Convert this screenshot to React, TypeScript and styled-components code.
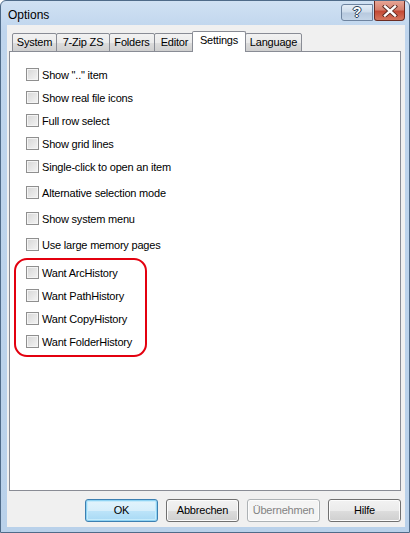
import React from 'react';
import styled, { createGlobalStyle } from 'styled-components';

const GlobalStyle = createGlobalStyle`
	html, body {
		margin: 0;
		padding: 0;
		background: #ffffff;
	}
	body {
		font-family: "Liberation Sans", Arial, sans-serif;
		font-size: 11px;
		letter-spacing: -0.2px;
		color: #000000;
	}
`;

interface TabItem {
	label: string;
	width: number;
}

interface OptionItem {
	label: string;
	gap: number;
}

const tabs: TabItem[] = [
	{ label: 'System', width: 45 },
	{ label: '7-Zip ZS', width: 54 },
	{ label: 'Folders', width: 46 },
	{ label: 'Editor', width: 41 },
	{ label: 'Settings', width: 52 },
	{ label: 'Language', width: 57 },
];

const options: OptionItem[] = [
	{ label: 'Show ".." item', gap: 0 },
	{ label: 'Show real file icons', gap: 0 },
	{ label: 'Full row select', gap: 0 },
	{ label: 'Show grid lines', gap: 0 },
	{ label: 'Single-click to open an item', gap: 0 },
	{ label: 'Alternative selection mode', gap: 3 },
	{ label: 'Show system menu', gap: 3 },
	{ label: 'Use large memory pages', gap: 3 },
];

const histories = ['Want ArcHistory', 'Want PathHistory', 'Want CopyHistory', 'Want FolderHistory'];

function Options() {
	const active = 'Settings';

	return (
		<>
			<GlobalStyle />
			<Window>
				<TitleBar>
					<Caption>Options</Caption>
					<CaptionButtons>
						<HelpButton>?</HelpButton>
						<CloseButton>
							<svg width="16" height="12" viewBox="0 0 16 12">
								<path d="M3 1.5 L13 10.5 M13 1.5 L3 10.5" stroke="#5a2a22" strokeWidth="4.2" strokeLinecap="square" />
								<path d="M3 1.5 L13 10.5 M13 1.5 L3 10.5" stroke="#ffffff" strokeWidth="2.4" strokeLinecap="square" />
							</svg>
						</CloseButton>
					</CaptionButtons>
				</TitleBar>
				<Client>
					<TabRow>
						{ tabs.map((tab) => (
							<Tab key={ tab.label } $width={ tab.width } $active={ tab.label === active }>
								{ tab.label }
							</Tab>
						)) }
					</TabRow>
					<Panel>
						{ options.map((opt) => (
							<CheckRow key={ opt.label } $gap={ opt.gap }>
								<Box />
								<span>{ opt.label }</span>
							</CheckRow>
						)) }
						<Highlight>
							{ histories.map((label) => (
								<CheckRow key={ label } $gap={ 0 } $inset>
									<Box />
									<span>{ label }</span>
								</CheckRow>
							)) }
						</Highlight>
					</Panel>
					<Footer>
						<Button $variant="default">OK</Button>
						<Button>Abbrechen</Button>
						<Button $variant="disabled">Übernehmen</Button>
						<Button>Hilfe</Button>
					</Footer>
				</Client>
			</Window>
		</>
	);
}

const Window = styled.div`
	box-sizing: border-box;
	width: 410px;
	height: 533px;
	display: flex;
	flex-direction: column;
	background: linear-gradient(to bottom, #d0e1f3 0px, #bfd5ed 30px, #b9d1ea 100%);
	border: 1px solid #4f6b89;
	border-radius: 6px 6px 0 0;
	overflow: hidden;
`;

const TitleBar = styled.div`
	height: 24px;
	display: flex;
	align-items: flex-start;
	justify-content: space-between;
	padding-left: 7px;
`;

const Caption = styled.div`
	font-size: 12px;
	line-height: 12px;
	letter-spacing: 0;
	margin-top: 8px;
	color: #000000;
`;

const CaptionButtons = styled.div`
	display: flex;
	align-items: flex-start;
	margin-right: 4px;
`;

const HelpButton = styled.div`
	box-sizing: border-box;
	width: 32px;
	height: 17px;
	margin-top: 3px;
	border: 1px solid #6e84a0;
	border-radius: 3px 0 0 3px;
	background: linear-gradient(to bottom, #e4edf7 0%, #cddbeb 48%, #b7c9de 52%, #c4d5e8 100%);
	color: #ffffff;
	font-weight: bold;
	font-size: 14px;
	line-height: 15px;
	text-align: center;
	text-shadow: 0 0 1px #30445c, 1px 0 0 #30445c, -1px 0 0 #30445c, 0 1px 0 #30445c, 0 -1px 0 #30445c;
`;

const CloseButton = styled.div`
	box-sizing: border-box;
	width: 31px;
	height: 20px;
	margin-left: 1px;
	border: 1px solid #6b2b22;
	border-top: none;
	border-radius: 0 0 4px 3px;
	background: linear-gradient(to bottom, #e7a595 0%, #d5806e 45%, #c44a35 55%, #d5765e 100%);
	display: flex;
	align-items: center;
	justify-content: center;
	padding-top: 1px;
`;

const Client = styled.div`
	flex: 1;
	display: flex;
	flex-direction: column;
	margin: 0 4px 5px 6px;
	padding: 6px 0 0 2px;
	background: #f0f0f0;
`;

const TabRow = styled.div`
	display: flex;
	align-items: flex-end;
	height: 21px;
	padding-left: 3px;
	margin-bottom: -1px;
	position: relative;
	z-index: 1;
`;

const Tab = styled.div<{ $width: number; $active?: boolean }>`
	box-sizing: border-box;
	width: ${ (p) => p.$active ? p.$width + 2 : p.$width }px;
	height: ${ (p) => p.$active ? 21 : 19 }px;
	margin: ${ (p) => p.$active ? '0 -1px 0 -2px' : '0 -1px 0 0' };
	border: 1px solid #898c95;
	border-bottom: ${ (p) => p.$active ? 'none' : '1px solid #898c95' };
	border-radius: 2px 2px 0 0;
	background: ${ (p) => p.$active
		? '#ffffff'
		: 'linear-gradient(to bottom, #f2f2f2 0%, #ebebeb 50%, #dddddd 51%, #cfcfcf 100%)' };
	position: relative;
	z-index: ${ (p) => p.$active ? 2 : 1 };
	text-align: center;
	line-height: ${ (p) => p.$active ? 16 : 17 }px;
	white-space: nowrap;
`;

const Panel = styled.div`
	box-sizing: border-box;
	width: 392px;
	height: 440px;
	border: 1px solid #898c95;
	background: #ffffff;
	padding: 11px 0 0 4px;
`;

const CheckRow = styled.div<{ $gap: number; $inset?: boolean }>`
	display: flex;
	align-items: center;
	gap: 3px;
	height: 23px;
	margin-top: ${ (p) => p.$gap }px;
	padding-left: ${ (p) => p.$inset ? 10 : 12 }px;
	white-space: nowrap;
`;

const Box = styled.span`
	box-sizing: border-box;
	display: inline-block;
	width: 13px;
	height: 13px;
	flex: none;
	border: 1px solid #8f8f8f;
	background: linear-gradient(135deg, #d6d6d6 0%, #e8e8e8 60%, #f4f4f4 100%);
	box-shadow: inset 0 0 0 1px #f4f4f4;
`;

const Highlight = styled.div`
	box-sizing: border-box;
	width: 133px;
	margin-top: 2px;
	padding: 1px 0 2px 0;
	border: 2px solid #e3000f;
	border-radius: 13px;
`;

const Footer = styled.div`
	display: flex;
	justify-content: flex-end;
	gap: 8px;
	width: 392px;
	margin-top: 8px;
`;

const Button = styled.div<{ $variant?: 'default' | 'disabled' }>`
	box-sizing: border-box;
	width: 73px;
	height: 23px;
	border-radius: 3px;
	text-align: center;
	line-height: 21px;
	border: 1px solid ${ (p) => p.$variant === 'default' ? '#3c7fb1' : p.$variant === 'disabled' ? '#adb2b5' : '#707070' };
	color: ${ (p) => p.$variant === 'disabled' ? '#838383' : '#000000' };
	background: ${ (p) => p.$variant === 'default'
		? 'linear-gradient(to bottom, #e3f4fc 0%, #d6eefb 50%, #bde4f9 51%, #a7d9f5 100%)'
		: p.$variant === 'disabled'
			? '#f4f4f4'
			: 'linear-gradient(to bottom, #f2f2f2 0%, #ebebeb 50%, #dddddd 51%, #cfcfcf 100%)' };
	box-shadow: ${ (p) => p.$variant === 'default' ? 'inset 0 0 0 1px #8fd3f3, inset 0 0 0 2px #c6ebfb' : 'inset 0 0 0 1px #fcfcfc' };
`;

export default Options;
